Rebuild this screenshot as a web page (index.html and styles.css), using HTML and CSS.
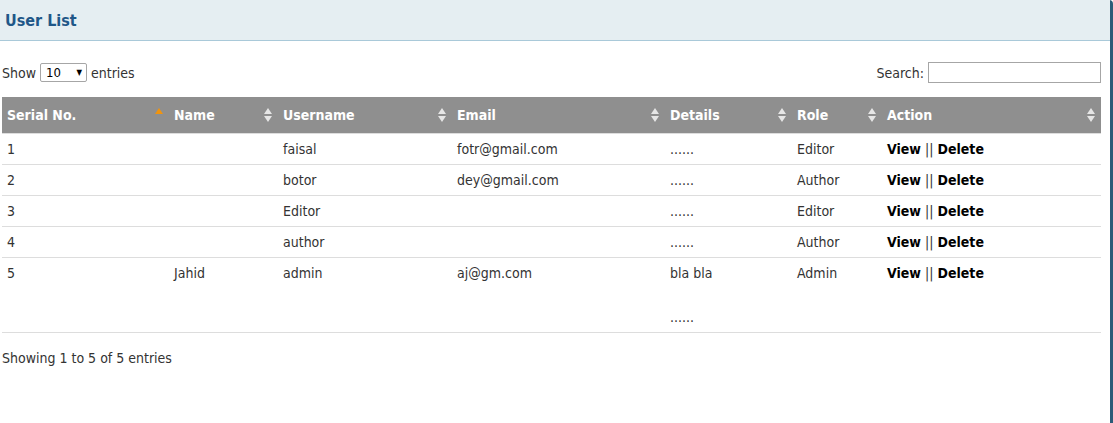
FILE: index.html
```html
<!DOCTYPE html>
<html>
<head>
<meta charset="utf-8">
<title>User List</title>
<link rel="stylesheet" href="styles.css">
</head>
<body>
<div class="panel">
  <div class="panel-heading"><h3 class="panel-title">User List</h3></div>
  <div class="panel-body">
    <div class="controls">
      <label class="length">Show <span class="select">10<span class="caret">&#9660;</span></span> entries</label>
      <label class="search">Search: <span class="search-input"></span></label>
    </div>
    <table class="grid">
      <thead>
        <tr>
          <th class="c1 asc">Serial No.</th>
          <th class="c2">Name</th>
          <th class="c3">Username</th>
          <th class="c4">Email</th>
          <th class="c5">Details</th>
          <th class="c6">Role</th>
          <th class="c7">Action</th>
        </tr>
      </thead>
      <tbody>
        <tr><td>1</td><td></td><td>faisal</td><td>fotr@gmail.com</td><td>......</td><td>Editor</td><td><b>View</b> || <b>Delete</b></td></tr>
        <tr><td>2</td><td></td><td>botor</td><td>dey@gmail.com</td><td>......</td><td>Author</td><td><b>View</b> || <b>Delete</b></td></tr>
        <tr><td>3</td><td></td><td>Editor</td><td></td><td>......</td><td>Editor</td><td><b>View</b> || <b>Delete</b></td></tr>
        <tr><td>4</td><td></td><td>author</td><td></td><td>......</td><td>Author</td><td><b>View</b> || <b>Delete</b></td></tr>
        <tr><td>5</td><td>Jahid</td><td>admin</td><td>aj@gm.com</td><td>bla bla<div class="more">......</div></td><td>Admin</td><td><b>View</b> || <b>Delete</b></td></tr>
      </tbody>
    </table>
    <div class="info">Showing 1 to 5 of 5 entries</div>
  </div>
</div>
</body>
</html>
```
FILE: styles.css
```css
html, body {
  margin: 0;
  padding: 0;
  background: #fff;
}
body {
  font-family: "DejaVu Sans Condensed", "DejaVu Sans", sans-serif;
  font-stretch: condensed;
  font-size: 14px;
  color: #333;
  height: 423px;
  overflow: hidden;
}
.panel {
  width: 1110px;
  height: 423px;
  border-right: 3px solid #2b5c78;
  border-top-right-radius: 4px;
}
.panel-heading {
  height: 40px;
  background: #e5eef2;
  border-bottom: 1px solid #a9c9d9;
  display: flex;
  align-items: center;
  padding-left: 5px;
}
.panel-title {
  margin: 0;
  font-size: 16px;
  font-weight: bold;
  color: #1f5788;
}
.panel-body {
  padding: 0 9px 0 2px;
}
.controls {
  display: flex;
  justify-content: space-between;
  align-items: center;
  height: 21px;
  margin-top: 21px;
  margin-bottom: 14px;
}
.length, .search {
  display: flex;
  align-items: center;
  gap: 4px;
}
.select {
  display: inline-flex;
  justify-content: space-between;
  align-items: center;
  box-sizing: border-box;
  width: 47px;
  height: 19px;
  border: 1px solid #a6a6a6;
  border-radius: 2px;
  padding: 0 4px 0 5px;
  color: #000;
  font-size: 13px;
}
.caret {
  font-size: 8px;
}
.search-input {
  display: inline-block;
  box-sizing: border-box;
  width: 173px;
  height: 21px;
  border: 1px solid #a6a6a6;
}
.grid {
  width: 1099px;
  border-collapse: collapse;
  table-layout: fixed;
}
.grid th {
  background: #8f8f8f;
  color: #fff;
  font-weight: bold;
  text-align: left;
  height: 36px;
  box-sizing: border-box;
  padding: 1px 5px 0;
  position: relative;
}
.grid th::before,
.grid th::after {
  content: "";
  position: absolute;
  right: 6px;
  width: 0;
  height: 0;
  border-left: 4px solid transparent;
  border-right: 4px solid transparent;
}
.grid th::before {
  top: 11px;
  border-bottom: 6px solid #e6e6e6;
}
.grid th::after {
  top: 19px;
  border-top: 6px solid #e6e6e6;
}
.grid th.asc::before {
  border-bottom-color: #f0940f;
  top: 11px;
}
.grid th.asc::after {
  display: none;
}
.c1 { width: 167px; }
.c2 { width: 109px; }
.c3 { width: 174px; }
.c4 { width: 213px; }
.c5 { width: 127px; }
.c6 { width: 90px; }
.c7 { width: 219px; }
.grid td {
  padding: 8px 5px 7px;
  line-height: 15px;
  border-top: 1px solid #ddd;
  vertical-align: top;
}
.grid td .more {
  margin-top: 29px;
}
.grid tbody tr:last-child td {
  border-bottom: 1px solid #ddd;
}
.grid td b {
  color: #000;
}
.info {
  margin-top: 17px;
}
```
